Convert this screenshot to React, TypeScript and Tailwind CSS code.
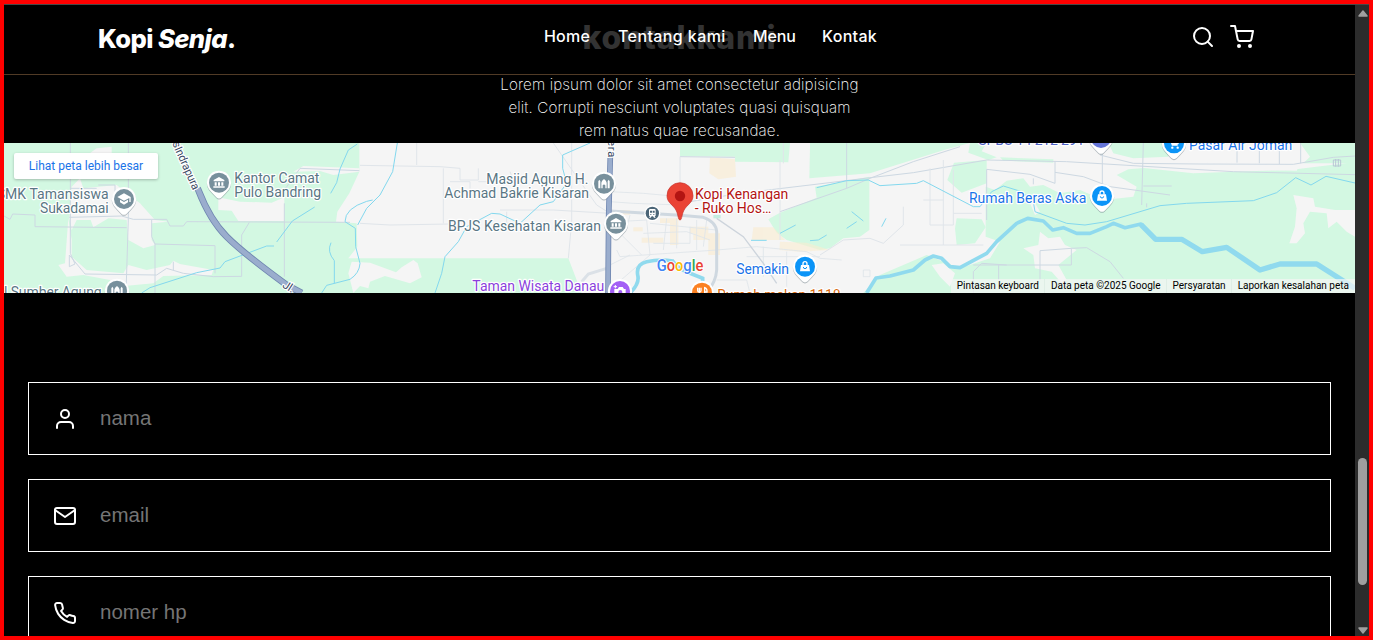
import React from "react";

const icon = {
  width: 24,
  height: 24,
  viewBox: "0 0 24 24",
  fill: "none",
  stroke: "currentColor",
  strokeWidth: 2,
  strokeLinecap: "round" as const,
  strokeLinejoin: "round" as const,
};

const SearchIcon = () => (
  <svg {...icon}>
    <circle cx="11" cy="11" r="8" />
    <path d="M21 21l-4.35-4.35" />
  </svg>
);
const CartIcon = () => (
  <svg {...icon}>
    <circle cx="9" cy="21" r="1" />
    <circle cx="20" cy="21" r="1" />
    <path d="M1 1h4l2.68 13.39a2 2 0 0 0 2 1.61h9.72a2 2 0 0 0 2-1.61L23 6H6" />
  </svg>
);
const UserIcon = () => (
  <svg {...icon}>
    <path d="M20 21v-2a4 4 0 0 0-4-4H8a4 4 0 0 0-4 4v2" />
    <circle cx="12" cy="7" r="4" />
  </svg>
);
const MailIcon = () => (
  <svg {...icon}>
    <path d="M4 4h16c1.1 0 2 .9 2 2v12c0 1.1-.9 2-2 2H4c-1.1 0-2-.9-2-2V6c0-1.1.9-2 2-2z" />
    <path d="M22 6l-10 7L2 6" />
  </svg>
);
const PhoneIcon = () => (
  <svg {...icon}>
    <path d="M22 16.92v3a2 2 0 0 1-2.18 2 19.79 19.79 0 0 1-8.63-3.07 19.5 19.5 0 0 1-6-6 19.79 19.79 0 0 1-3.07-8.67A2 2 0 0 1 4.11 2h3a2 2 0 0 1 2 1.72 12.84 12.84 0 0 0 .7 2.81 2 2 0 0 1-.45 2.11L8.09 9.91a16 16 0 0 0 6 6l1.27-1.27a2 2 0 0 1 2.11-.45 12.84 12.84 0 0 0 2.81.7A2 2 0 0 1 22 16.92z" />
  </svg>
);

type GlyphName = "school" | "bank" | "mosque" | "bag" | "camera" | "food" | "cart" | "none";

const glyphs: Record<GlyphName, React.ReactNode> = {
  none: null,
  school: (
    <path fill="#fff" fillRule="evenodd" d="M0-17L20-6V9h-4V-3L0 5-20-6zM-12 2L0 9 12 2v8L0 17l-12-7z" />
  ),
  bank: (
    <path fill="#fff" d="M-16-8L0-17 16-8v4h-32zM-13-1h6V9h-6zM-3-1h6V9h-6zM7-1h6V9H7zM-17 11h34v4h-34z" />
  ),
  mosque: (
    <path fill="#fff" d="M-17 14V-7l3-5 3 5v21zM11 14V-7l3-5 3 5v21zM-8 14V-3Q-7-9 0-14 7-9 8-3V14H4V5Q0 0-4 5v9z" />
  ),
  bag: (
    <>
      <path fill="#fff" d="M-12-5h24l3 19h-30z" />
      <path fill="none" stroke="#fff" strokeWidth="4" d="M-6-4v-5a6 6 0 0 1 12 0v5" />
      <path fill="none" stroke="#0b94f7" strokeWidth="3" d="M-5 1a5 5 0 0 0 10 0" />
    </>
  ),
  camera: (
    <>
      <path fill="#fff" d="M-17-6h10l4-6H8l4 6h5v24h-34z" />
      <circle cx="1" cy="3" r="6" fill="#a35ff5" />
      <path stroke="#fff" strokeWidth="3" d="M-14-18v10M-19-13h10" />
    </>
  ),
  food: (
    <path fill="none" stroke="#fff" strokeWidth="4" d="M-13-15v9q0 4 5 4t5-4v-9M-8-15V18M8 18V-15q8 2 7 13H8" />
  ),
  cart: (
    <>
      <path fill="none" stroke="#fff" strokeWidth="4" d="M-17-13h6l6 18h16M-9-8h24L12 1H-5" />
      <circle cx="-5" cy="13" r="3.5" fill="#fff" />
      <circle cx="11" cy="13" r="3.5" fill="#fff" />
    </>
  ),
};

function Pin({ x, y, color, glyph }: { x: number; y: number; color: string; glyph: GlyphName }) {
  const body = "M0-36A36 36 0 0 1 30 20Q20 32 8 44 0 51-8 44-20 32-30 20A36 36 0 0 1 0-36Z";
  return (
    <g transform={`translate(${x} ${y})`}>
      <path d={body} fill="#6b7b85" opacity=".5" transform="translate(0 3)" />
      <path d={body} fill="#fff" />
      <circle r="30" fill={color} />
      {glyphs[glyph]}
    </g>
  );
}

interface LabelProps {
  x: number;
  y: number;
  w: number;
  color: string;
  children: string;
}
function Label({ x, y, w, color, children }: LabelProps) {
  return (
    <text
      x={x}
      y={y}
      textLength={w}
      fill={color}
      stroke="#fff"
      strokeWidth="7"
      strokeLinejoin="round"
      paintOrder="stroke"
      fontSize="42"
    >
      {children}
    </text>
  );
}

const slate = "#5a7684";
const blue = "#1a73e8";

function MapDrawing() {
  return (
    <svg
      className="block h-[150px] w-[1351px]"
      viewBox="12 9 4053 450"
      fontFamily="Roboto, sans-serif"
      fill="none"
    >
      <rect x="12" y="9" width="4053" height="450" fill="#f5f5f5" />

      {/* vegetation */}
      <g fill="#d3f8e2">
        <path d="M12 9H1078V95L1048 160 1012 215 1008 245 1070 250 1072 320 1045 355H1705L1745 459H12Z" />
        <path d="M2040 9H2370L2365 67 2205 65V50L2040 48Z" />
        <path d="M2430 20L2430 9H2910L2840 28 2610 100 2428 115Z" />
        <path d="M2445 140L2450 173 2340 218 2305 238 2330 278 2360 300 2460 330 2490 325 2530 295 2580 290 2608 270V110Z" />
        <path d="M2910 9H2960L2945 34 2990 52 2965 60 2905 38Z" />
        <path d="M2862 68L2960 60 2960 130 2885 158 2842 120Z" />
        <path d="M2870 235L2945 238 2957 262 2925 310 2870 315 2865 265Z" />
        <path d="M3350 105L3385 88 3432 84 3580 100 3700 95 3870 90 4065 66V459H2590L2640 405 2780 345 2880 385 2970 355 3000 305 2957 290V140L2985 150 3020 122 3070 115 3090 140 3130 135 3180 160 3240 150 3310 180 3400 170 3410 140Z" />
        <path d="M3325 9H3505V50L3400 55 3340 40ZM3900 9H4065V70H3910L3930 50Z" />
        <path d="M3000 52L3160 58 3160 68 3010 62Z" />
        <path d="M2140 225h22v10h-22z" fill="#c4eee0" />
      </g>

      {/* built-up land and clearings */}
      <g fill="#f5f5f5">
        <path d="M215 140L240 115 250 145 350 135 420 190 465 240 505 245 455 250 455 300 465 315 430 325 385 300 380 240 325 235 280 262 272 240 230 240 215 270 208 235Z" />
        <path d="M255 50L290 25 335 20 335 40 300 60ZM1000 9" />
        <path d="M655 172L720 185 815 188 853 172V243H715L695 212 655 210Z" />
        <path d="M880 95L910 78 1078 85 1078 95 1000 105 960 93Z" />
        <path d="M205 235L215 300 215 350 260 390 370 400 385 375 440 390 510 375 520 362 540 372 640 390 635 405 490 408 460 430 350 440 330 420 250 405 200 410 175 375 195 370Z" />
        <path d="M1055 365L1110 368 1188 397 1205 382 1240 360 1253 370 1265 412 1230 430 1155 408 1110 425 1105 445 1080 438 1060 459 1045 400Z" />
        <path d="M3070 325L3115 315 3120 275 3145 295 3180 290 3195 315 3230 330 3175 375 3200 420 3190 435 3155 395 3105 385 3100 345Z" />
        <path d="M3880 165L3940 175 3945 200 4005 210 4065 210V290L4040 275 4010 245 3985 265 3980 220 3930 215 3910 250 3915 280 3890 310H3868L3885 260 3890 205Z" />
        <path d="M3540 65L3900 72 3890 92 3750 90 3600 80 3580 100Z" />
        <path d="M2795 375L2830 370 2865 400 2850 440 2820 410Z" />
        <path d="M3100 180L3120 215 3105 225 3090 190Z" />
      </g>

      {/* commercial blocks */}
      <g fill="#faecd0" opacity=".6">
        <path d="M2130 52L2205 58 2208 110 2155 118 2128 100ZM2260 262L2320 262 2355 300 2255 300ZM2340 305L2420 308 2490 330 2400 335 2338 330Z" />
        <path d="M1840 210h50v14h-50zM1925 293h65v15h-65zM1980 235h40v14h-40zM2010 235h25v80h-25zM2070 260h55v20h-55zM2080 280h80v20h-80zM2125 295h35v50h-35zM1900 262h28v12h-28z" />
      </g>

      {/* minor roads */}
      <g stroke="#cdd8e2" strokeWidth="3">
        <path d="M211 9V340L225 372 208 380V345L255 402 470 405 500 385 550 400 640 410 725 409V285L748 247M385 9V235L378 459M12 228L30 238 38 222 105 225V260L380 263M208 232L365 228 400 238H500L510 258H550L560 245 1050 247M455 240V290L465 312 645 317V400M465 312V459M853 190V410M853 150L900 85 1078 92M295 135h50v20M210 145h80M520 365v25" />
        <path d="M1080 76L1320 80 1380 85M1250 9V75M1330 85V250M1380 85V120H1435V85M1350 125H1410V180M1435 125H1560M1530 95L1545 135M1080 250L1170 255 1350 252M1660 9L1730 110 1790 195 1830 220M1715 9V245L1705 355M1500 210H1575L1660 210 1830 220M1520 215V250H1560" stroke="#e0e5ea" />
        <path d="M2040 50L2205 52M2040 190L2220 160 2430 135 2620 112 2740 98 2960 60 3200 65 3700 95 4065 104" />
        <path d="M2340 215L2540 145 2610 115 2740 65 2880 20M2540 9V145" />
        <path d="M2040 50V180M2340 60V300M2350 9V70M2790 85V255H2860V90M2710 200V255L2650 310 2610 295 2530 300 2460 345M2830 60V315H2950M2860 220H2945M2830 180H2770M2830 315H2700" stroke="#e0e5ea" />
        <path d="M2960 88L3090 103 3165 130V65M3165 97L3250 110 3330 140 3510 165M3430 9L3425 195M3430 138H3515M3307 40V140M2960 88V240M3300 45L3400 70 3600 72 3880 73 4000 52 4065 48M3711 9V68M3778 9V70M3838 9V72M3902 9V70M3440 190v12M2920 375H3214V325L3260 323 3330 365 3370 415M3120 420V332L3214 325M2920 459V395L2945 370 3020 375M2996 375V420M3100 115v18" />
        <path d="M1830 155L1930 160 2040 170M1830 185L1900 190 2040 195M1850 245L1940 240 1950 345 1840 440M1950 250L2150 270M1930 280L2060 275 2130 300M1960 310H2070V260M2000 235L1990 330M2030 235V325M2090 240V330M2120 240L2110 320M1850 270L1925 345M1890 225L1880 265M1850 330L1860 350 2150 330 2270 320 2420 335 2460 355 2525 360M2240 350H2460M2290 320V410M2360 335V440M2150 420H2240L2250 459M1890 345L1820 380M2590 390v20h20v-20z" stroke="#dfe4e9" strokeWidth="2.5" />
        <path d="M2150 235L2230 290 2290 370 2330 430" stroke="#cdd4dc" strokeWidth="4" />
        <path d="M1745 425L1765 402 1820 385" stroke="#dbe1e7" strokeWidth="9" />
        <path d="M1830 213L2040 226 2110 232Q2148 245 2150 275V390Q2148 425 2120 459" stroke="#cfd8e0" strokeWidth="9" />
        <path d="M4000 60h22v18h-22zM4007 57v23M4015 57v23" stroke="#b9c7d5" />
      </g>

      {/* rivers and streams */}
      <g stroke="#83d8ee" strokeWidth="3">
        <path d="M425 459L450 443 590 398 660 384 675 365 800 318H822M830 306L877 243 944 201M992 160L1010 128 1020 87 1045 30 1072 12M993 308Q980 335 1003 362V430M965 459L980 436 1050 418Q1078 400 1080 370L1067 320 1066 265 1035 245Q1035 205 1100 184L1118 180M1192 9L1178 95 1140 165 1100 205 1073 255M1305 459L1325 400 1335 350 1375 305 1400 260 1475 220 1500 222 1560 250 1620 195 1660 185 1700 130 1688 85V45L1770 9" />
        <path d="M2450 143L2540 122 2605 120 2640 137 2750 130 2770 122 2920 200H2940L2975 155 3010 138 3065 155 3100 185 3105 215 3200 250 3255 255 3320 245 3480 197 3560 190 3760 182 3830 158 3887 113 3933 135 3978 109 4065 129M2253 301H2300M2340 280L2387 255M2430 302L2455 300 2480 285M2555 215L2590 243M2540 265L2570 245M2645 260L2658 235" />
        <path d="M1890 459Q1920 430 1913 405 1908 372 1940 365 1980 356 2018 363 2035 388 2070 400L2108 415V435" stroke="#90daee" strokeWidth="11" />
        <path d="M2600 459L2628 414 2670 408 2740 390 2775 360 2800 348 2825 355 2850 380 2880 383 2960 340 2990 305 3050 250 3083 235 3130 243 3158 270 3190 263 3230 280 3270 280 3320 260 3340 250 3375 263 3423 252 3467 298" stroke="#90daee" strokeWidth="11" strokeLinejoin="round" />
        <path d="M3423 254L3467 298H3545L3607 335 3680 322 3780 390 3840 372H3950L4065 445" stroke="#90daee" strokeWidth="16" strokeLinejoin="round" />
      </g>

      {/* highways */}
      <g strokeLinejoin="round">
        <path d="M530 9L595 150Q630 240 680 290T860 435L905 459" stroke="#6f86b0" strokeWidth="20" />
        <path d="M530 9L595 150Q630 240 680 290T860 435L905 459" stroke="#9aadcd" strokeWidth="15" />
        <path d="M1832 9L1826 230 1824 459" stroke="#6f86b0" strokeWidth="17" />
        <path d="M1832 9L1826 230 1824 459" stroke="#9aadcd" strokeWidth="12" />
        <path d="M534 9L592 145" stroke="#d3f8e2" strokeWidth="24" />
        <path d="M1832 9V52" stroke="#f5f5f5" strokeWidth="20" />
      </g>

      {/* road names */}
      <g fill="#3a4a63" stroke="#fff" strokeWidth="7" paintOrder="stroke" fontSize="34">
        <text transform="translate(523 26) rotate(66)" textLength="138">Indrapura</text>
        <text transform="translate(517 9) rotate(70)">s</text>
        <text transform="translate(845 440) rotate(33)">Jl.</text>
        <text transform="translate(1823 0) rotate(90)" textLength="52">era</text>
      </g>

      <Label x={-10} y={178} w={336} color={slate}>SMK Tamansiswa</Label>
      <Label x={120} y={219} w={206} color={slate}>Sukadamai</Label>
      <Label x={12} y={471} w={293} color={slate}>l Sumber Agung</Label>
      <Label x={703} y={129} w={255} color={slate}>Kantor Camat</Label>
      <Label x={703} y={171} w={260} color={slate}>Pulo Bandring</Label>
      <Label x={1459} y={132} w={306} color={slate}>Masjid Agung H.</Label>
      <Label x={1333} y={174} w={434} color={slate}>Achmad Bakrie Kisaran</Label>
      <Label x={1344} y={273} w={459} color={slate}>BPJS Kesehatan Kisaran</Label>
      <Label x={1417} y={453} w={396} color="#8a3fdc">Taman Wisata Danau</Label>
      <Label x={2209} y={402} w={158} color={blue}>Semakin</Label>
      <Label x={2152} y={479} w={370} color="#d9690c">Rumah makan 1118</Label>
      <Label x={2907} y={189} w={352} color={blue}>Rumah Beras Aska</Label>
      <Label x={2935} y={15} w={318} color="#4f63c6">SPBU 14 212 291</Label>
      <Label x={3567} y={31} w={310} color={blue}>Pasar Air Joman</Label>

      <Pin x={372} y={177} color="#78909c" glyph="school" />
      <Pin x={351} y={452} color="#78909c" glyph="mosque" />
      <Pin x={657} y={128} color="#78909c" glyph="bank" />
      <Pin x={1812} y={131} color="#78909c" glyph="mosque" />
      <Pin x={1848} y={251} color="#78909c" glyph="bank" />
      <Pin x={1860} y={453} color="#a35ff5" glyph="camera" />
      <Pin x={2415} y={380} color="#0b94f7" glyph="bag" />
      <Pin x={2106} y={458} color="#fb8122" glyph="food" />
      <Pin x={3306} y={168} color="#0b94f7" glyph="bag" />
      <Pin x={3303} y={-6} color="#6575d8" glyph="none" />
      <Pin x={3522} y={10} color="#0b94f7" glyph="cart" />

      {/* train station */}
      <g transform="translate(1957 220)">
        <circle r="24" fill="#fff" />
        <circle r="20" fill="#4b6577" />
        <path fill="#fff" d="M-10-9q0-4 4-4h12q4 0 4 4V6q0 3-3 3l3 4H5L2 9h-4l-3 4h-5l3-4q-3 0-3-3z" />
        <path fill="#4b6577" d="M-7-8h6v6h-6zM1-8h6v6H1zM-6 2h3v3h-3zM3 2h3v3H3z" />
      </g>

      {/* selected place */}
      <path
        d="M2040 240C2033 240 2036 220 2024 204C2012 190 2001 184 2001 167A39 39 0 0 1 2079 167C2079 184 2068 190 2056 204C2044 220 2047 240 2040 240Z"
        fill="#ea4335"
        stroke="#c5302a"
        strokeWidth="2"
      />
      <circle cx="2040" cy="168" r="15.500" fill="#b31412" />
      <Label x={2085} y={177} w={280} color="#b31412">Kopi Kenangan</Label>
      <Label x={2084} y={219} w={230} color="#b31412">- Ruko Hos…</Label>

      <text x="1970" y="394" fontSize="47" textLength="140" lengthAdjust="spacingAndGlyphs" fontWeight="500" stroke="#fff" strokeWidth="5" paintOrder="stroke">
        <tspan fill="#4285f4">G</tspan>
        <tspan fill="#ea4335">o</tspan>
        <tspan fill="#fbbc04">o</tspan>
        <tspan fill="#4285f4">g</tspan>
        <tspan fill="#34a853">l</tspan>
        <tspan fill="#ea4335">e</tspan>
      </text>
    </svg>
  );
}

function MapPanel() {
  return (
    <div className="relative h-[150px] overflow-hidden font-['Roboto',sans-serif]">
      <MapDrawing />
      <a className="absolute left-[10px] top-[10px] flex h-[26px] w-[144px] items-center justify-center rounded-[2px] bg-white text-[12px] text-[#1a73e8] shadow-[0_1px_3px_rgba(0,0,0,0.25)]">
        Lihat peta lebih besar
      </a>
      <div className="absolute bottom-0 right-0 flex h-[14px] divide-x divide-[#dfeee6] whitespace-nowrap bg-[#f5f5f5]/70 text-[10px] leading-[14px] text-black">
        <span className="px-[5.5px]">Pintasan keyboard</span>
        <span className="px-[5.5px]">Data peta ©2025 Google</span>
        <span className="px-[5.5px]">Persyaratan</span>
        <span className="pl-[5.5px] pr-[6px]">Laporkan kesalahan peta</span>
      </div>
    </div>
  );
}

function Navbar() {
  return (
    <nav className="absolute inset-x-0 top-0 flex h-[71px] items-start border-b border-t border-b-[#513b26] border-t-[#484848] pl-[94px] pr-[101px] text-white">
      <a className="mt-[14px] w-[446px] whitespace-nowrap text-[25.6px] font-extrabold leading-[40px] tracking-[-0.6px]">
        Kopi <span className="italic">Senja</span>.
      </a>
      <div className="mt-[19px] flex whitespace-nowrap text-[16px] font-medium leading-6">
        <a className="w-[74px] tracking-[0.2px]">Home</a>
        <a className="w-[135px] tracking-[0.4px]">Tentang kami</a>
        <a className="w-[69px] tracking-[-0.1px]">Menu</a>
        <a className="tracking-[0.3px]">Kontak</a>
      </div>
      <div className="ml-auto mt-[20px] flex gap-[15px]">
        <SearchIcon />
        <CartIcon />
      </div>
    </nav>
  );
}

function Field({ icon, placeholder }: { icon: React.ReactNode; placeholder: string }) {
  return (
    <label className="flex h-[73px] shrink-0 items-start border border-white pl-6 pt-6 text-white">
      {icon}
      <input
        placeholder={placeholder}
        className="-mt-px ml-[23px] h-6 flex-1 bg-transparent font-['Liberation_Sans',Arial,sans-serif] text-[20.5px] leading-6 outline-none placeholder:text-[#757575]"
      />
    </label>
  );
}

function Scrollbar() {
  return (
    <div className="flex w-[14px] shrink-0 flex-col items-center border-t border-[#484848] bg-[#2c2c2c] pl-px">
      <svg className="mt-[5px] shrink-0" width="10" height="7" viewBox="0 0 10 7">
        <path d="M5 1L9 6H1z" fill="#9f9f9f" stroke="#9f9f9f" strokeLinejoin="round" strokeWidth="1.500" />
      </svg>
      <div className="mt-[441px] h-[127px] w-[9px] shrink-0 rounded-full bg-[#9f9f9f]" />
      <svg className="mt-[42px] shrink-0" width="10" height="7" viewBox="0 0 10 7">
        <path d="M5 6L9 1H1z" fill="#9f9f9f" stroke="#9f9f9f" strokeLinejoin="round" strokeWidth="1.500" />
      </svg>
    </div>
  );
}

export default function App() {
  return (
    <div className="flex h-[640px] w-[1373px] overflow-hidden border-4 border-[#ff0000] bg-black font-['Inter',sans-serif]">
      <main className="relative w-[1351px] shrink-0 overflow-hidden">
        <section className="flex h-[139px] flex-col items-center whitespace-nowrap text-center">
          <h2 className="mt-[14px] text-[32px] font-extrabold leading-[40px] tracking-[0.9px] text-[#333333]">kontakkami</h2>
          <p className="mt-[15px] text-[15.2px] font-[200] leading-[23px] tracking-[0.12px] text-white">
            Lorem ipsum dolor sit amet consectetur adipisicing
            <br />
            elit. Corrupti nesciunt voluptates quasi quisquam
            <br />
            rem natus quae recusandae.
          </p>
        </section>
        <MapPanel />
        <form className="mx-6 mt-[89px] flex flex-col gap-6">
          <Field icon={<UserIcon />} placeholder="nama" />
          <Field icon={<MailIcon />} placeholder="email" />
          <Field icon={<PhoneIcon />} placeholder="nomer hp" />
        </form>
        <Navbar />
      </main>
      <Scrollbar />
    </div>
  );
}
